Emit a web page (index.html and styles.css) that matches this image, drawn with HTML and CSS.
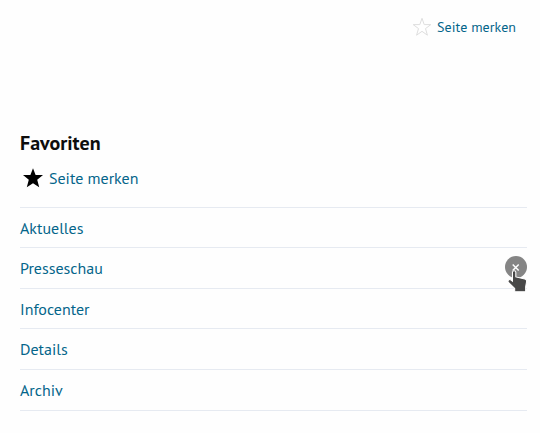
FILE: index.html
```
<!DOCTYPE html>
<html lang="de">
<head>
<meta charset="utf-8">
<title>Favoriten</title>
<link rel="stylesheet" href="styles.css">
</head>
<body>
<header class="topbar">
  <a class="remember remember-small" href="#">
    <svg class="star-outline" viewBox="0 0 20 20"><path d="M10 1.3 12.2 7.6H18.8L13.5 11.6 15.4 18.2 10 14.3 4.6 18.2 6.5 11.6 1.2 7.6H7.8Z"/></svg>
    <span>Seite merken</span>
  </a>
</header>
<main class="favorites">
  <h2 class="title">Favoriten</h2>
  <a class="remember" href="#">
    <svg class="star-solid" viewBox="0 0 22 20"><path d="M11 .2 13.6 7H21L15.2 11.7 17.2 19.3 11 15.2 4.8 19.3 6.8 11.7 1 7H8.4Z"/></svg>
    <span>Seite merken</span>
  </a>
  <ul class="list">
    <li class="item"><a href="#">Aktuelles</a></li>
    <li class="item"><a href="#">Presseschau</a>
      <button class="remove" aria-label="Entfernen"><svg viewBox="0 0 22 22"><path d="M7.7 8.5 13.7 14.5M13.7 8.5 7.7 14.5"/></svg></button>
      <svg class="pointer" viewBox="0 0 20 22"><path d="M5.2 2.2C5.2.2 8.4.2 8.4 2.2V6.6L17 8.6Q18.9 9 18.7 11L17.8 16V20.8H7.3V17.6L1.3 11.9C.2 10.3 1.9 8.4 3.5 9.4L5.2 10.7Z"/></svg>
    </li>
    <li class="item"><a href="#">Infocenter</a></li>
    <li class="item"><a href="#">Details</a></li>
    <li class="item"><a href="#">Archiv</a></li>
  </ul>
</main>
</body>
</html>
```
FILE: styles.css
```
* { box-sizing: border-box; }
body {
  margin: 0;
  background: #fefefe;
  color: #0d0d0d;
  font: 16px/20px "PT Sans", "Noto Sans", sans-serif;
}
a { color: #04658a; text-decoration: none; }
.topbar {
  display: flex;
  justify-content: flex-end;
  height: 131px;
  padding: 17px 24px 0 0;
}
.remember { display: flex; align-items: center; height: 22px; }
.remember-small { height: 20px; font-size: 14px; gap: 5px; letter-spacing: .05px; }
.star-outline { width: 20px; height: 20px; fill: #fff; stroke: #dedede; stroke-width: 1; }
.favorites { padding: 0 13px 0 20px; }
.title { margin: 0 0 11px; font-size: 20px; line-height: 25px; font-weight: 700; }
.star-solid { width: 22px; height: 20px; margin: 0 5px 0 2px; fill: #000; }
.list {
  display: grid;
  grid-template-rows: 40px 41px 40px 41px 41px;
  margin: 18px 0 0;
  padding: 0;
  list-style: none;
  border-top: 1px solid #e6eaf1;
}
.item {
  position: relative;
  display: flex;
  align-items: flex-start;
  justify-content: space-between;
  padding-top: 10px;
  border-bottom: 1px solid #e6eaf1;
}
.remove { width: 22px; height: 22px; margin-top: -2px; padding: 0; border: 0; border-radius: 50%; background: #858585; }
.remove svg { display: block; width: 22px; height: 22px; fill: none; stroke: #fff; stroke-width: 1.5; }
.pointer { position: absolute; right: -1px; top: 22px; width: 21px; height: 23px; fill: #484848; stroke: #fff; stroke-width: 1; }
```
